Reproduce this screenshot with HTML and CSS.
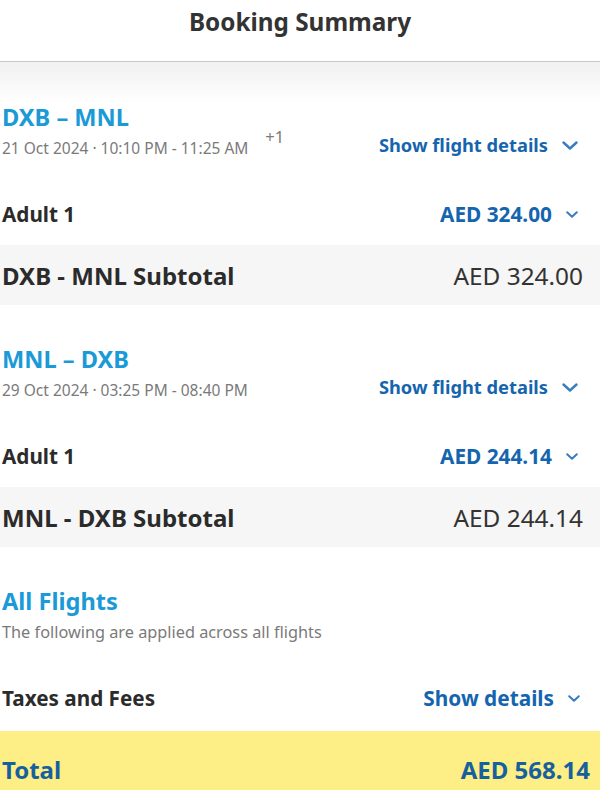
FILE: index.html
```html
<!DOCTYPE html>
<html>
<head>
<meta charset="utf-8">
<link rel="stylesheet" href="styles.css">
</head>
<body>
<div class="page">
  <header class="header"><h1 class="title">Booking Summary</h1></header>
  <div class="content">
    <section class="flight">
      <div class="flight-head">
        <div class="flight-info">
          <h2 class="route">DXB – MNL</h2>
          <div class="date">21 Oct 2024 · 10:10 PM - 11:25 AM<span class="plus">+1</span></div>
        </div>
        <a class="link">Show flight details <svg class="chev" viewBox="0 0 16 9" width="16" height="9"><path d="M1.5 1.5 L8 7.5 L14.5 1.5" fill="none" stroke="currentColor" stroke-width="2.4" stroke-linecap="round" stroke-linejoin="round"/></svg></a>
      </div>
      <div class="pax">
        <span class="pax-label">Adult 1</span>
        <span class="pax-price">AED 324.00 <svg class="chev-sm" viewBox="0 0 12 7" width="12" height="7"><path d="M1.2 1.2 L6 5.8 L10.8 1.2" fill="none" stroke="currentColor" stroke-width="2" stroke-linecap="round" stroke-linejoin="round"/></svg></span>
      </div>
      <div class="subtotal">
        <span class="sub-label">DXB - MNL Subtotal</span>
        <span class="sub-value">AED 324.00</span>
      </div>
    </section>
    <section class="flight">
      <div class="flight-head">
        <div class="flight-info">
          <h2 class="route">MNL – DXB</h2>
          <div class="date">29 Oct 2024 · 03:25 PM - 08:40 PM</div>
        </div>
        <a class="link">Show flight details <svg class="chev" viewBox="0 0 16 9" width="16" height="9"><path d="M1.5 1.5 L8 7.5 L14.5 1.5" fill="none" stroke="currentColor" stroke-width="2.4" stroke-linecap="round" stroke-linejoin="round"/></svg></a>
      </div>
      <div class="pax">
        <span class="pax-label">Adult 1</span>
        <span class="pax-price">AED 244.14 <svg class="chev-sm" viewBox="0 0 12 7" width="12" height="7"><path d="M1.2 1.2 L6 5.8 L10.8 1.2" fill="none" stroke="currentColor" stroke-width="2" stroke-linecap="round" stroke-linejoin="round"/></svg></span>
      </div>
      <div class="subtotal">
        <span class="sub-label">MNL - DXB Subtotal</span>
        <span class="sub-value">AED 244.14</span>
      </div>
    </section>
    <section class="all">
      <h2 class="route">All Flights</h2>
      <div class="date subtitle">The following are applied across all flights</div>
      <div class="pax taxes">
        <span class="pax-label">Taxes and Fees</span>
        <span class="pax-price">Show details <svg class="chev-sm" viewBox="0 0 12 7" width="12" height="7"><path d="M1.2 1.2 L6 5.8 L10.8 1.2" fill="none" stroke="currentColor" stroke-width="2" stroke-linecap="round" stroke-linejoin="round"/></svg></span>
      </div>
    </section>
    <div class="total">
      <span class="total-label">Total</span>
      <span class="total-value">AED 568.14</span>
    </div>
  </div>
</div>
</body>
</html>
```

FILE: styles.css
```css
* { box-sizing: border-box; }
html, body { margin: 0; padding: 0; background: #fff; }
body { font-family: "Noto Sans", "Open Sans", sans-serif; color: #333; }
.page { width: 600px; overflow: hidden; }
.header { height: 62px; border-bottom: 1px solid #c9c9c9; display: flex; justify-content: center; padding-top: 5px; }
.title { margin: 0; font-size: 24.3px; font-weight: 700; color: #333; line-height: 34px; }
.content { background: linear-gradient(#f1f1f1 0, #fff 42px); padding-top: 39px; }
.flight, .all { display: flex; flex-direction: column; }
.flight-head { display: flex; justify-content: space-between; align-items: flex-start; padding: 0 22px 0 2px; }
.route { margin: 0; font-size: 23.6px; font-weight: 700; color: #1a9ad6; line-height: 32px; }
.date { font-size: 15.5px; color: #7a7a7a; line-height: 22px; margin-top: 4px; }
.subtitle { font-size: 16.3px; }
.plus { display: inline-block; font-size: 16.5px; line-height: 20px; position: relative; top: -11px; margin-left: 17px; }
.link { color: #1565ae; font-weight: 700; font-size: 18.3px; line-height: 26px; display: flex; align-items: center; gap: 14px; margin-top: 31px; }
.chev { color: #3a7cc0; margin-top: 1px; }
.pax { display: flex; justify-content: space-between; align-items: center; height: 62px; padding: 0 22px 0 2px; margin-top: 24px; }
.pax-label { font-size: 20.7px; font-weight: 700; color: #2b2b2b; }
.pax-price { color: #1565ae; font-weight: 700; font-size: 20.8px; display: flex; align-items: center; gap: 14px; }
.chev-sm { color: #3a7cc0; margin-top: 1px; }
.subtotal { background: #f6f6f6; height: 60px; display: flex; justify-content: space-between; align-items: center; padding: 0 17px 0 2px; }
.sub-label { font-size: 24px; font-weight: 700; color: #2b2b2b; }
.sub-value { font-size: 24.4px; color: #333; }
.flight + .flight, .all { margin-top: 38px; }
.all { padding-left: 2px; }
.taxes { padding-left: 0; padding-right: 20px; }
.total { background: #fdee86; height: 62px; display: flex; justify-content: space-between; align-items: flex-start; padding: 23px 10px 0 2px; margin-top: 2px; }
.total-label, .total-value { font-size: 24px; line-height: 32px; font-weight: 700; color: #17609e; }
```
